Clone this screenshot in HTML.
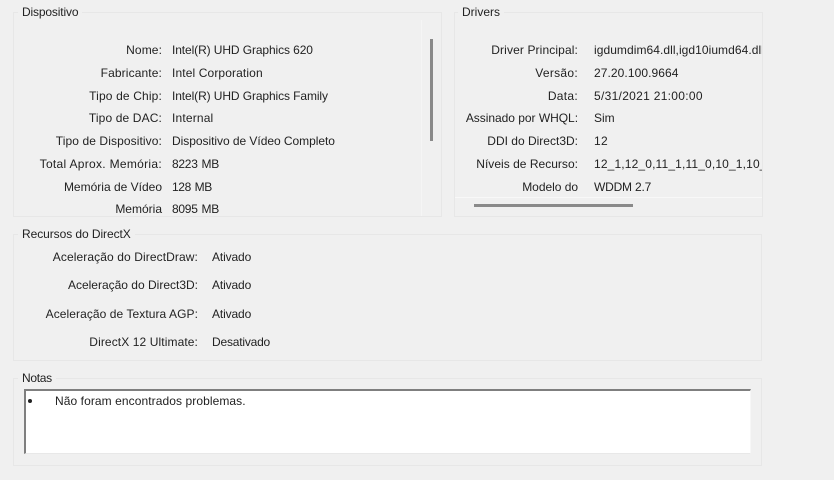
<!DOCTYPE html>
<html>
<head>
<meta charset="utf-8">
<style>
html,body{margin:0;padding:0;background:#f0f0f0;}
#p{position:relative;width:834px;height:480px;overflow:hidden;background:#f0f0f0;font-family:"Liberation Sans",sans-serif;font-size:12px;color:#222;filter:blur(.25px);}
#p div{position:absolute;white-space:nowrap;}
.b{border:1px solid #e7e7e7;box-sizing:border-box;background:#f0f0f0;}
.t{background:#f0f0f0;padding:0 4px;height:14px;line-height:14px;}
.l{text-align:right;line-height:14px;height:14px;}
.v{line-height:14px;height:14px;}
.l1{left:0;width:162px;}
.v1{left:172px;}
.l2{left:454px;width:124px;}
.v2{left:594px;}
.l3{left:0;width:198px;}
.v3{left:212px;}
</style>
</head>
<body>
<div id="p">
  <div class="b" style="left:13px;top:12px;width:429px;height:205px;"></div>
  <div style="left:421px;top:20px;width:1px;height:196px;background:#f5f5f5;"></div>
  <div class="t" style="left:18px;top:5px;letter-spacing:-.15px;">Dispositivo</div>
  <div style="left:430px;top:39px;width:3px;height:102px;background:#8a8a8a;"></div>

  <div class="l l1" style="top:43px;letter-spacing:.1px;">Nome:</div><div class="v v1" style="top:43px;letter-spacing:-.1px;">Intel(R) UHD Graphics 620</div>
  <div class="l l1" style="top:66px;letter-spacing:.12px;">Fabricante:</div><div class="v v1" style="top:66px;letter-spacing:.12px;">Intel Corporation</div>
  <div class="l l1" style="top:89px;letter-spacing:.15px;">Tipo de Chip:</div><div class="v v1" style="top:89px;letter-spacing:-.1px;">Intel(R) UHD Graphics Family</div>
  <div class="l l1" style="top:111px;letter-spacing:.13px;">Tipo de DAC:</div><div class="v v1" style="top:111px;letter-spacing:.17px;">Internal</div>
  <div class="l l1" style="top:134px;letter-spacing:.1px;">Tipo de Dispositivo:</div><div class="v v1" style="top:134px;letter-spacing:-.04px;">Dispositivo de Vídeo Completo</div>
  <div class="l l1" style="top:157px;letter-spacing:.3px;">Total Aprox. Memória:</div><div class="v v1" style="top:157px;letter-spacing:-.27px;word-spacing:.8px;">8223 MB</div>
  <div class="l l1" style="top:180px;">Memória de Vídeo</div><div class="v v1" style="top:180px;letter-spacing:-.37px;word-spacing:.8px;">128 MB</div>
  <div class="l l1" style="top:202px;">Memória</div><div class="v v1" style="top:202px;letter-spacing:-.27px;word-spacing:.8px;">8095 MB</div>

  <div class="b" style="left:454px;top:12px;width:309px;height:205px;"></div>
  <div class="t" style="left:458px;top:5px;">Drivers</div>
  <div style="left:455px;top:197px;width:307px;height:1px;background:#f8f8f8;"></div>
  <div style="left:474px;top:204px;width:159px;height:3px;background:#8a8a8a;"></div>
  <div class="l l2" style="top:43px;letter-spacing:.12px;">Driver Principal:</div>
  <div style="left:594px;top:43px;width:168px;height:16px;overflow:hidden;line-height:14px;letter-spacing:.06px;">igdumdim64.dll,igd10iumd64.dll,igd10iumd64.dll</div>
  <div class="l l2" style="top:66px;letter-spacing:.3px;">Versão:</div><div class="v v2" style="top:66px;letter-spacing:.08px;">27.20.100.9664</div>
  <div class="l l2" style="top:89px;letter-spacing:.3px;">Data:</div><div class="v v2" style="top:89px;letter-spacing:.3px;">5/31/2021 21:00:00</div>
  <div class="l l2" style="top:111px;letter-spacing:-.03px;">Assinado por WHQL:</div><div class="v v2" style="top:111px;">Sim</div>
  <div class="l l2" style="top:134px;">DDI do Direct3D:</div><div class="v v2" style="top:134px;letter-spacing:.3px;">12</div>
  <div class="l l2" style="top:157px;letter-spacing:.02px;">Níveis de Recurso:</div>
  <div style="left:594px;top:157px;width:168px;height:16px;overflow:hidden;line-height:14px;letter-spacing:.15px;">12_1,12_0,11_1,11_0,10_1,10_0,9_3</div>
  <div class="l l2" style="top:180px;letter-spacing:-.03px;">Modelo do</div><div class="v v2" style="top:180px;letter-spacing:-.2px;">WDDM 2.7</div>

  <div class="b" style="left:13px;top:234px;width:749px;height:127px;"></div>
  <div class="t" style="left:18px;top:227px;letter-spacing:-.07px;">Recursos do DirectX</div>
  <div class="l l3" style="top:250px;letter-spacing:.1px;">Aceleração do DirectDraw:</div><div class="v v3" style="top:250px;letter-spacing:-.13px;">Ativado</div>
  <div class="l l3" style="top:278px;">Aceleração do Direct3D:</div><div class="v v3" style="top:278px;letter-spacing:-.13px;">Ativado</div>
  <div class="l l3" style="top:307px;letter-spacing:.07px;">Aceleração de Textura AGP:</div><div class="v v3" style="top:307px;letter-spacing:-.13px;">Ativado</div>
  <div class="l l3" style="top:335px;letter-spacing:.1px;">DirectX 12 Ultimate:</div><div class="v v3" style="top:335px;letter-spacing:-.2px;">Desativado</div>

  <div class="b" style="left:13px;top:378px;width:749px;height:88px;"></div>
  <div class="t" style="left:18px;top:371px;letter-spacing:-.3px;">Notas</div>
  <div style="left:24px;top:389px;width:727px;height:65px;box-sizing:border-box;background:#fff;border-top:2px solid #7f7f7f;border-left:2px solid #7f7f7f;border-right:1px solid #f7f7f7;border-bottom:1px solid #e8e8e8;"></div>
  <div style="left:28px;top:399px;width:4px;height:4px;border-radius:50%;background:#222;"></div>
  <div class="v" style="left:55px;top:394px;letter-spacing:.08px;">Não foram encontrados problemas.</div>
</div>
</body>
</html>
